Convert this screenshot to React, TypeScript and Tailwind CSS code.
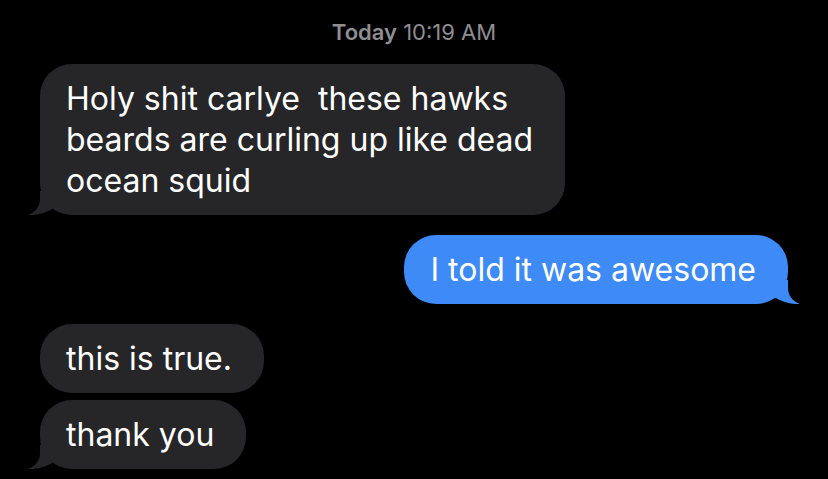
import React from 'react';

const font = { fontFamily: 'Inter, "Liberation Sans", sans-serif' };

function Tail({ side, color }: { side: 'left' | 'right'; color: string }) {
    return (
        <svg
            width="28"
            height="24"
            viewBox="0 0 28 24"
            className={
                side === 'left'
                    ? 'absolute bottom-0 -left-[12px]'
                    : 'absolute bottom-0 -right-[12px] -scale-x-100'
            }
        >
            <path
                d="M13 0 L12 0 L12 8 C12 15 8 21 0 24 C9 24.6 18 22 26 17 L26 0 Z"
                fill={color}
            />
        </svg>
    );
}

function Bubble({
    text,
    side = 'left',
    tail = false,
    className = '',
}: {
    text: string;
    side?: 'left' | 'right';
    tail?: boolean;
    className?: string;
}) {
    const color = side === 'left' ? '#262629' : '#3e8af7';
    return (
        <div
            className={`relative w-fit rounded-[32px] py-[14px] pl-[26px] pr-[32px] text-[32px] leading-[41px] whitespace-pre text-white ${
                side === 'left' ? 'self-start bg-[#262629]' : 'self-end bg-[#3e8af7]'
            } ${className}`}
        >
            {tail && <Tail side={side} color={color} />}
            <span className="relative">{text}</span>
        </div>
    );
}

export default function App() {
    return (
        <div
            className="flex h-[479px] w-[828px] flex-col overflow-hidden bg-black px-[40px]"
            style={font}
        >
            <div className="pt-[19px] text-center text-[22px] leading-[26px] text-[#8e8e93]">
                <span className="font-semibold">Today</span> 10:19 AM
            </div>
            <Bubble
                className="mt-[19px]"
                tail
                text={'Holy shit carlye  these hawks\nbeards are curling up like dead\nocean squid'}
            />
            <Bubble className="mt-[20px]" side="right" tail text="I told it was awesome" />
            <Bubble className="mt-[20px] py-[13px]" text="this is true." />
            <Bubble className="mt-[7px] py-[13px]" tail text="thank you" />
        </div>
    );
}
